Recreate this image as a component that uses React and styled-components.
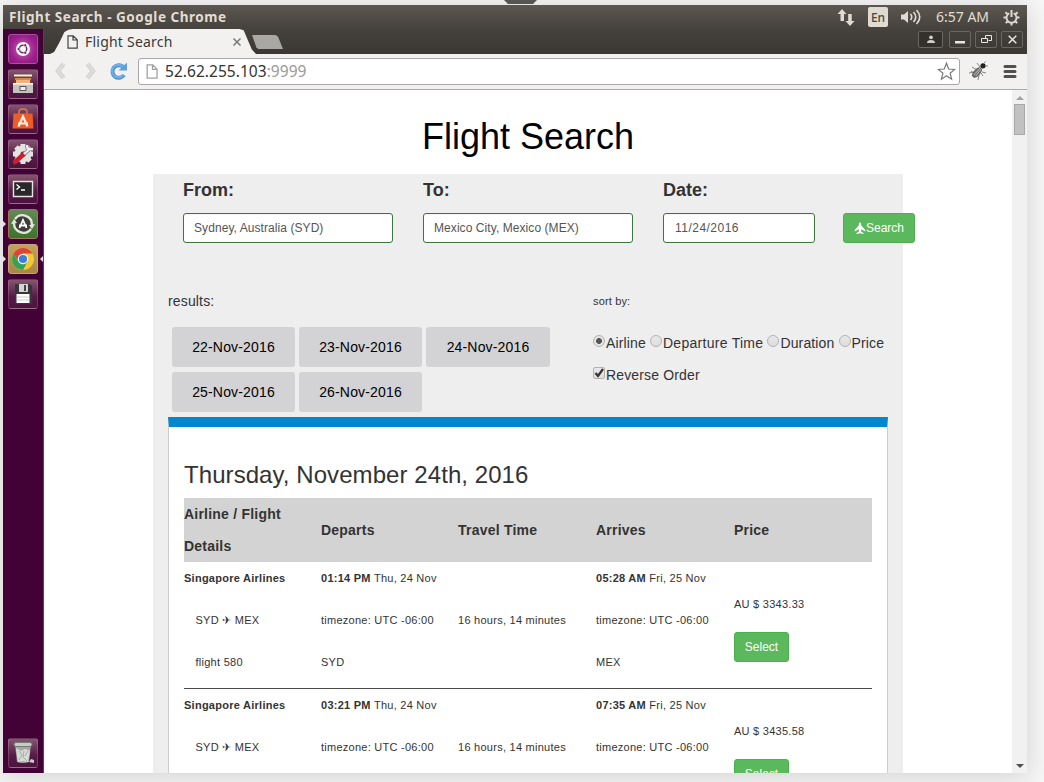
import React from "react";
import styled, { createGlobalStyle, css } from "styled-components";

const GlobalStyle = createGlobalStyle`
  * { box-sizing: border-box; }
  body {
    margin: 0;
    overflow: hidden;
    background: #f7f7f7;
    font-family: "Liberation Sans", Arial, sans-serif;
    color: #333;
  }
  h1, h2, p { margin: 0; font-weight: normal; }
`;

const uiFont = css`
  font-family: "Noto Sans", "Open Sans", sans-serif;
`;

const Stage = styled.div`
  position: relative;
  width: 1044px;
  height: 782px;
  padding: 5px 17px 9px 3px;
  overflow: hidden;
`;

const Notch = styled.div`
  position: absolute;
  top: 0;
  left: 504px;
  width: 33px;
  height: 4px;
  background: #565656;
  clip-path: polygon(0 0, 100% 0, 88% 100%, 12% 100%);
`;

const Desktop = styled.div`
  width: 1024px;
  height: 768px;
  display: flex;
  flex-direction: column;
  overflow: hidden;
  box-shadow: 0 3px 24px 2px rgba(0, 0, 0, 0.14);
  background: #fff;
`;

const MenuBar = styled.header`
  ${uiFont}
  flex: none;
  height: 24px;
  display: flex;
  align-items: center;
  justify-content: space-between;
  padding: 0 7px 0 6px;
  background: linear-gradient(#5c5751, #45413c);
  color: #e2ddd3;
`;

const WindowTitle = styled.span`
  font-size: 13.5px;
  font-weight: 700;
  white-space: nowrap;
  letter-spacing: 0.53px;
`;

const Indicators = styled.div`
  display: flex;
  align-items: center;
  svg { display: block; }
`;

const Language = styled.span`
  width: 20px;
  height: 20px;
  margin: 0 12px 0 13px;
  border-radius: 2px;
  background: #dfdbd2;
  color: #4a4640;
  font-size: 12px;
  font-weight: 500;
  line-height: 21px;
  text-align: center;
`;

const Clock = styled.span`
  margin: -2px 12px 0 15px;
  width: 55px;
  font-size: 14px;
  letter-spacing: 0;
  white-space: nowrap;
`;

const Body = styled.div`
  flex: 1;
  min-height: 0;
  display: flex;
`;

const Launcher = styled.nav`
  flex: none;
  width: 41px;
  display: flex;
  flex-direction: column;
  gap: 5px;
  padding: 5px 6px 5px 5px;
  background: #430235;
  border-right: 1px solid #6b3660;
`;

const Tile = styled.div`
  position: relative;
  flex: none;
  width: 30px;
  height: 30px;
  border-radius: 3px;
  border: 1px solid ${(p) => p.$edge || "rgba(255,255,255,.16)"};
  background: ${(p) => p.$bg || "linear-gradient(#85556f, #551a45 60%, #4d123d)"};
  ${(p) => p.$last && "margin-top: auto;"}
  svg { display: block; width: 28px; height: 28px; }
`;

const Pip = styled.i`
  position: absolute;
  top: 11px;
  ${(p) => (p.$right ? "right: -6px;" : "left: -6px;")}
  border: 3px solid transparent;
  ${(p) => (p.$right ? "border-right-color: #e6dbe3; border-left: 0;" : "border-left-color: #e6dbe3; border-right: 0;")}
`;

const Browser = styled.div`
  flex: 1;
  min-width: 0;
  display: flex;
  flex-direction: column;
`;

const TabStrip = styled.div`
  flex: none;
  height: 25px;
  display: flex;
  background: linear-gradient(#45413c, #3b3833);
`;

const Tab = styled.div`
  ${uiFont}
  width: 206px;
  height: 25px;
  margin-left: 6px;
  padding: 0 15px 0 16px;
  display: flex;
  align-items: center;
  background: #f2f1f0;
  clip-path: polygon(0 100%, 2% 92%, 4.5% 55%, 7% 12%, 9% 3%, 11% 0, 92% 0, 94% 5%, 98% 82%, 100% 100%);
  font-size: 14px;
  letter-spacing: 0.22px;
  color: #3a3a3a;
  span { flex: 1; margin-left: 6px; white-space: nowrap; }
`;

const NewTab = styled.div`
  width: 31px;
  height: 14px;
  margin: 6px 0 0 -4px;
  background: #aaa8a5;
  clip-path: polygon(0 0, 76% 0, 84% 12%, 100% 100%, 20% 100%, 14% 88%);
`;

const WindowButtons = styled.div`
  display: flex;
  align-items: flex-start;
  gap: 4px;
  margin-left: auto;
  padding: 2px 4px 0 0;
`;

const WindowButton = styled.span`
  width: 22px;
  height: 17px;
  border: 1px solid #6a6761;
  border-radius: 2px;
  display: flex;
  align-items: center;
  justify-content: center;
  ${(p) => p.$user && "width: 25px; margin-right: 2px; background: #34312d;"}
`;

const Toolbar = styled.div`
  flex: none;
  height: 36px;
  display: flex;
  align-items: center;
  padding: 0 8px 1px 9px;
  background: #f2f1f0;
  border-bottom: 1px solid #aca7ab;
  > svg { flex: none; }
`;

const AddressBar = styled.div`
  ${uiFont}
  width: 822px;
  height: 27px;
  margin: 0 8px 0 10px;
  display: flex;
  align-items: center;
  padding: 0 3px 0 6px;
  border: 1px solid #aaa7ab;
  border-radius: 3px;
  background: #fff;
  font-size: 15.5px;
  color: #333;
  p { flex: 1; margin-left: 6px; letter-spacing: 0.04px; white-space: nowrap; }
  em { font-style: normal; color: #999; }
`;

const Viewport = styled.div`
  flex: 1;
  min-height: 0;
  display: flex;
`;

const Page = styled.main`
  flex: 1;
  overflow: hidden;
  display: flex;
  flex-direction: column;
  align-items: center;
`;

const Scrollbar = styled.aside`
  width: 15px;
  display: flex;
  flex-direction: column;
  align-items: center;
  background: #f1f1f1;
  padding: 6px 0 5px;
`;

const Arrow = styled.i`
  width: 0;
  height: 0;
  border: 4px solid transparent;
  ${(p) => (p.$down ? "border-top: 4px solid #505050; border-bottom: 0; margin-top: auto;" : "border-bottom: 4px solid #a3a3a3; border-top: 0;")}
`;

const Thumb = styled.div`
  width: 11px;
  height: 31px;
  margin-top: 4px;
  background: #c1c1c1;
  border: 1px solid #a8a8a8;
`;

const PageTitle = styled.h1`
  flex: none;
  height: 84px;
  padding-top: 27px;
  font-size: 36px;
  line-height: 40px;
  color: #000;
`;

const Panel = styled.section`
  flex: none;
  width: 750px;
  padding: 0 15px;
  background: #eee;
`;

const SearchForm = styled.div`
  display: flex;
  align-items: flex-end;
  height: 69px;
  padding-left: 15px;
`;

const Field = styled.label`
  flex: none;
  width: ${(p) => p.$width}px;
  margin-right: ${(p) => p.$gap}px;
  font-size: 18px;
  font-weight: 700;
  line-height: 32px;
`;

const Input = styled.span`
  display: block;
  height: 30px;
  margin-top: 7px;
  padding: 0 10px;
  border: 1px solid #3c763d;
  border-radius: 3px;
  background: #fff;
  color: #555;
  font-size: 12px;
  font-weight: 400;
  line-height: 28px;
  letter-spacing: ${(p) => (p.$date ? "0.48px" : "0.07px")};
  ${(p) => p.$date && "padding-left: 11px;"}
  box-shadow: inset 0 1px 1px rgba(0, 0, 0, 0.05);
`;

const GreenButton = styled.button`
  flex: none;
  display: inline-flex;
  align-items: center;
  justify-content: center;
  width: ${(p) => p.$width}px;
  height: 30px;
  padding: 0;
  border: 1px solid #4cae4c;
  border-radius: 3px;
  background: #5cb85c;
  color: #fff;
  font: 12px/28px "Liberation Sans", Arial, sans-serif;
`;

const Controls = styled.div`
  display: flex;
  padding-top: 42px;
  height: 174px;
  font-size: 14px;
  line-height: 32px;
  letter-spacing: 0.15px;
`;

const DateColumn = styled.div`
  width: 425px;
`;

const DateButtons = styled.div`
  display: flex;
  flex-wrap: wrap;
  gap: 5px 4px;
  padding: 10px 0 0 4px;
`;

const DateButton = styled.button`
  width: 123px;
  height: 40px;
  padding: 0;
  border: 0;
  border-radius: 3px;
  background: #d3d2d4;
  color: #000;
  font: 14px "Liberation Sans", Arial, sans-serif;
  letter-spacing: 0.16px;
  &:nth-child(3) { width: 124px; }
`;

const SortColumn = styled.div`
  flex: none;
  white-space: nowrap;
  small { display: block; font-size: 11px; margin-bottom: 10px; }
`;

const SortRow = styled.div`
  display: flex;
  align-items: center;
  gap: 4px;
`;

const Choice = styled.label`
  display: flex;
  align-items: center;
  ${(p) => p.$wide && "letter-spacing: 0.28px;"}
`;

const Mark = styled.i`
  position: relative;
  width: 12px;
  height: 12px;
  margin: -4px 1px 0 0;
  border: 1px solid #b2b2b2;
  border-radius: ${(p) => (p.$square ? "2px" : "50%")};
  background: linear-gradient(#e9e9e9, #ddd);
  ${(p) => p.$on && "background: radial-gradient(circle, #555 0 2.6px, #e5e5e5 3.2px);"}
  svg { position: absolute; left: 0; top: -1px; }
`;

const Results = styled.section`
  height: 420px;
  padding: 32px 15px 0;
  border: 1px solid #ccc;
  border-top: 10px solid #0088ce;
  background: #fff;
`;

const DayTitle = styled.h2`
  font-size: 24px;
  line-height: 32px;
  height: 39px;
  letter-spacing: 0.07px;
`;

const FlightRow = styled.div`
  display: grid;
  grid-template-columns: 137px 137px 138px 138px 1fr;
  height: ${(p) => (p.$head ? 64 : 127)}px;
  line-height: 32px;
  ${(p) =>
    p.$head
      ? "align-items: center; background: #d3d3d3; font-size: 14px; font-weight: 700; letter-spacing: 0.22px;"
      : "border-bottom: 1px solid #4a4a4a; font-size: 11px; letter-spacing: 0.26px;"}
`;

const Cell = styled.div`
  display: flex;
  flex-direction: column;
  gap: 10px;
  white-space: nowrap;
  padding-top: ${(p) => p.$top || 0}px;
`;

const Indent = styled.span`
  padding-left: 11.5px;
`;

const SelectSlot = styled.div`
  margin-top: 2px;
  line-height: 0;
`;

const PageIcon = ({ size = 13, stroke = "#666" }) => (
  <svg width={size} height={size + 1} viewBox="0 0 13 14" fill="none" stroke={stroke} strokeWidth="1.2">
    <path d="M2 .8h5.2l4 4v8.4H2zM7 .8V5h4.2" />
  </svg>
);

const Chevron = ({ flip }) => (
  <svg width="14" height="18" viewBox="0 0 14 18">
    <g transform={flip ? "translate(14 0) scale(-1 1)" : undefined} fill="none">
      <path d="M10.500 2 5 9l5.500 7" stroke="#cfcdca" strokeWidth="4.400" />
      <path d="M10.500 2 5 9l5.500 7" stroke="#dedcd9" strokeWidth="2.800" />
    </g>
  </svg>
);

const Spacer = styled.span`
  flex: none;
  width: ${(p) => p.$width}px;
`;

const gear = Array.from({ length: 8 }, (_, i) => i * 45);

const flights = [
  { depart: "01:14 PM", arrive: "05:28 AM", price: "3343.33", number: "580", from: "SYD", to: "MEX" },
  { depart: "03:21 PM", arrive: "07:35 AM", price: "3435.58" },
];

function LauncherIcons() {
  return (
    <Launcher>
      <Tile $bg="radial-gradient(circle, #c467b5, #9d1f8c 65%, #8d147c)" $edge="#a354a0">
        <svg viewBox="0 0 28 28">
          <circle cx="14" cy="14" r="7" fill="#fff" />
          <circle cx="14" cy="14" r="3.7" fill="none" stroke="#712566" strokeWidth="1.5" />
          <g fill="#712566" stroke="#fff" strokeWidth=".6">
            <circle cx="9.6" cy="14" r="1.5" /><circle cx="16.2" cy="10.2" r="1.5" /><circle cx="16.2" cy="17.8" r="1.5" />
          </g>
        </svg>
      </Tile>
      <Tile>
        <svg viewBox="0 0 28 28">
          <path d="M5 5h18v10H5z" fill="#7d3c19" />
          <path d="M5 4.500h18v2H5z" fill="#f7f0dd" />
          <path d="M6 8h16v2H6z" fill="#c98a58" /><path d="M7 10h14v3H7z" fill="#efb27a" />
          <path d="M4 13h20v10H4z" fill="#c4c3c0" /><path d="M4 13h20v1.500H4z" fill="#fff" />
          <path d="M11 16.500h6v4h-6z" fill="#eee" stroke="#555" />
        </svg>
      </Tile>
      <Tile>
        <svg viewBox="0 0 28 28">
          <path d="M10 10V7q0-3 4-3t4 3v3" fill="none" stroke="#e77747" strokeWidth="1.5" />
          <path d="M4.500 8.500h19l1 15h-21z" fill="#ec5c27" />
          <path d="m9.500 21.500 4.500-10 4.500 10M9 18.500h10" fill="none" stroke="#ffece2" strokeWidth="2.2" />
        </svg>
      </Tile>
      <Tile>
        <svg viewBox="0 0 28 28">
          <g fill="#e5e2e2">
            {gear.map((a) => <path key={a} d="M11.500 4h5v5h-5z" transform={`rotate(${a} 14 14)`} />)}
          </g>
          <circle cx="14" cy="14" r="5.500" fill="none" stroke="#e5e2e2" strokeWidth="6" />
          <path d="m6 22 9-8" stroke="#c6202d" strokeWidth="4.500" strokeLinecap="round" />
          <path d="m15 14 6-5m-3-4q-1 5 6 4" stroke="#8b8690" strokeWidth="3.600" fill="none" />
          <path d="m15 14 6-5m-3-4q-1 5 6 4" stroke="#f1f0f0" strokeWidth="2.200" fill="none" />
        </svg>
      </Tile>
      <Tile>
        <svg viewBox="0 0 28 28">
          <path d="M4.500 6.500h19v15h-19z" fill="#29272a" stroke="#e6e3e4" strokeWidth="1.4" />
          <path d="m7.500 9.500 3 2.500-3 2.500M12 15h4" fill="none" stroke="#fff" strokeWidth="1.4" />
        </svg>
      </Tile>
      <Tile $bg="linear-gradient(#648956, #3a742b)" $edge="#a87457">
        <Pip />
        <svg viewBox="0 0 28 28">
          <circle cx="14" cy="14" r="8" fill="#403d39" />
          <path d="M6 9a9.500 9.500 0 0 1 17 6M22 19a9.500 9.500 0 0 1-17-6" fill="none" stroke="#e2e6dd" strokeWidth="2.3" />
          <path d="m20 15 6-1-3 5zM8 13l-6 1 3-5z" fill="#e2e6dd" />
          <path d="m10.500 18 3.500-8 3.500 8M10 15.500h8" fill="none" stroke="#fff" strokeWidth="1.8" />
        </svg>
      </Tile>
      <Tile $bg="linear-gradient(#c3a25d, #a88746)" $edge="#c1a779">
        <Pip /><Pip $right />
        <svg viewBox="0 0 28 28">
          <circle cx="14" cy="14" r="11" fill="#f2c933" />
          <path d="M4.500 8.500A11 11 0 0 1 23.500 8.500H14L9.400 16.600z" fill="#db4639" />
          <path d="M4.500 8.500A11 11 0 0 0 14 25l4.600-8.500H9.400z" fill="#36a155" />
          <circle cx="14" cy="14" r="5.300" fill="#f4f4f0" /><circle cx="14" cy="14" r="4.100" fill="#3b7de0" />
        </svg>
      </Tile>
      <Tile>
        <svg viewBox="0 0 28 28">
          <path d="M6 4h15l2 2v18H6z" fill="#373538" />
          <path d="M10 4h9v8h-9z" fill="#d4d3d3" /><path d="M15 5h2v6h-2z" fill="#444" />
          <path d="M7.500 14h13v9h-13z" fill="#fff" /><path d="M8 17h12M8 20h12" stroke="#ccc" />
        </svg>
      </Tile>
      <Tile $last>
        <svg viewBox="0 0 28 28">
          <path d="m6 5 2 18q6 2 12 0l2-18z" fill="#a5a8a3" />
          <path d="m7 9 5 3 4-2 5 2-2 11-5-1-5 1z" fill="#d7dad6" />
          <path d="m10 12 3 4-3 5m5-9-1 6 4 4m1-10-3 5" fill="none" stroke="#a5aaa3" />
          <rect x="5" y="3.500" width="18" height="4" rx="2" fill="#c8cbc6" stroke="#757c77" />
          <path d="m20 23 2-3 3 1v3z" fill="#ccc" />
        </svg>
      </Tile>
    </Launcher>
  );
}

function Flight({ flight }) {
  return (
    <FlightRow>
      <Cell><b>Singapore Airlines</b><Indent>SYD ✈ MEX</Indent>{flight.number && <Indent>flight {flight.number}</Indent>}</Cell>
      <Cell><span><b>{flight.depart}</b> Thu, 24 Nov</span><span>timezone: UTC -06:00</span>{flight.from && <span>{flight.from}</span>}</Cell>
      <Cell $top={42}><span>16 hours, 14 minutes</span></Cell>
      <Cell><span><b>{flight.arrive}</b> Fri, 25 Nov</span><span>timezone: UTC -06:00</span>{flight.to && <span>{flight.to}</span>}</Cell>
      <Cell $top={26}>
        <span>AU $ {flight.price}</span>
        <SelectSlot><GreenButton $width={55}>Select</GreenButton></SelectSlot>
      </Cell>
    </FlightRow>
  );
}

export default function App() {
  return (
    <Stage>
      <GlobalStyle />
      <Notch />
      <Desktop>
        <MenuBar>
          <WindowTitle>Flight Search - Google Chrome</WindowTitle>
          <Indicators>
            <svg width="18" height="18" viewBox="0 0 18 18" fill="#dfdbd2">
              <path d="M5 1 9.500 6H7v7H3.500V6H.5zM13 18l-4.500-5h2.700V6h3.500v7h2.800z" />
            </svg>
            <Language>En</Language>
            <svg width="21" height="18" viewBox="0 0 21 18" fill="none" stroke="#dfdbd2" strokeWidth="1.6">
              <path d="M1 6.500h3l4-3.500v12l-4-3.500H1z" fill="#dfdbd2" stroke="none" />
              <path d="M10.500 6q2.500 3 0 6M13.500 4q4.500 5 0 10M16.500 2q6.500 7 0 14" />
            </svg>
            <Clock>6:57 AM</Clock>
            <svg width="17" height="17" viewBox="0 0 17 17" fill="none" stroke="#dfdbd2">
              <path d="M6.300 4.200a5 5 0 1 0 4.400 0" strokeWidth="1.800" />
              <path d="M8.500 1v7" strokeWidth="2" />
              {[50, 90, 135, 180, 225, 270, 310].map((a) => (
                <path key={a} d="M8.500 .5v3" strokeWidth="2" transform={`rotate(${a} 8.500 8.500)`} />
              ))}
            </svg>
          </Indicators>
        </MenuBar>
        <Body>
          <LauncherIcons />
          <Browser>
            <TabStrip>
              <Tab>
                <PageIcon size={13} stroke="#444" />
                <span>Flight Search</span>
                <svg width="8" height="8" viewBox="0 0 8 8" stroke="#777" strokeWidth="1.500"><path d="m.5.5 7 7m0-7-7 7" /></svg>
              </Tab>
              <NewTab />
              <WindowButtons>
                <WindowButton $user>
                  <svg width="10" height="9" viewBox="0 0 10 9" fill="#d0ceca"><circle cx="5" cy="2.300" r="1.900" /><path d="M1 8q0-3 4-3t4 3z" /></svg>
                </WindowButton>
                <WindowButton><svg width="10" height="8" viewBox="0 0 10 8"><path d="M0 5h10v2.500H0z" fill="#e8e6e2" /></svg></WindowButton>
                <WindowButton>
                  <svg width="11" height="9" viewBox="0 0 11 9" fill="none" stroke="#e8e6e2"><path d="M4.500 3V.500h6v5h-3M.500 3.500h6v4h-6z" /></svg>
                </WindowButton>
                <WindowButton><svg width="9" height="9" viewBox="0 0 9 9" stroke="#e8e6e2" strokeWidth="1.500"><path d="m.7.7 7.600 7.600m0-7.600L.7 8.300" /></svg></WindowButton>
              </WindowButtons>
            </TabStrip>
            <Toolbar>
              <Chevron />
              <Spacer $width={17} />
              <Chevron flip />
              <Spacer $width={11} />
              <svg width="19" height="20" viewBox="0 0 19 20" fill="none">
                <path d="M15 14A6.300 6.300 0 1 1 14 5.800" stroke="#4b8fd2" strokeWidth="4" />
                <path d="M14.500 13.800A6.300 6.300 0 1 1 14 5.800" stroke="#73aee4" strokeWidth="2.200" />
                <path d="M18 1.500V9.500H9.500z" fill="#5c9fdf" />
              </svg>
              <AddressBar>
                <PageIcon size={14} stroke="#a19fa2" />
                <p>52.62.255.103<em>:9999</em></p>
                <svg width="19" height="19" viewBox="0 0 19 19" fill="#fff" stroke="#777" strokeWidth="1.200">
                  <path d="m9.500 1.200 2.200 5.800 6 .4-4.600 3.800 1.500 6-5.100-3.400L4.400 17.200l1.500-6L1.300 7.400l6-.4z" />
                </svg>
              </AddressBar>
              <svg width="20" height="20" viewBox="0 0 20 20" fill="none" stroke="#858585">
                <path d="M9 9 4 6M12 6l-3-4M7 11l-6 1M11 14l-1 5M14 11l4 1M13 12l2 3M6 12l-3-2" />
                <ellipse cx="9" cy="11.500" rx="5.600" ry="2.700" transform="rotate(-48 9 11.500)" fill="#777" stroke="#555" />
                <path d="m6 14 6-7m-4 8 5-7" stroke="#b4b4b4" />
                <circle cx="15" cy="4.800" r="2.600" fill="#222" stroke="none" />
                <path d="m16 2 1.500-1.500M17.500 5H20" />
              </svg>
              <Spacer $width={15} />
              <svg width="14" height="15" viewBox="0 0 14 15" stroke="#505050" strokeWidth="3" strokeLinecap="round"><path d="M2 2.500h10M2 7.500h10M2 12.500h10" /></svg>
            </Toolbar>
            <Viewport>
              <Page>
                <PageTitle>Flight Search</PageTitle>
                <Panel>
                  <SearchForm>
                    <Field $width={210} $gap={30}>From:<Input>Sydney, Australia (SYD)</Input></Field>
                    <Field $width={210} $gap={30}>To:<Input>Mexico City, Mexico (MEX)</Input></Field>
                    <Field $width={152} $gap={28}>Date:<Input $date>11/24/2016</Input></Field>
                    <GreenButton $width={72}>
                      <svg width="12" height="12" viewBox="-.5 0 12 12" fill="#fff"><path d="M5.500 0q1.300 1 1.300 3.600L10.800 8v1.500L6.700 7.300 6.500 9.500 9 11v1l-3.500-.8L2 12v-1l2.500-1.500-.2-2.200L.2 9.500V8l4-4.400Q4.200 1 5.500 0" /></svg>
                      Search
                    </GreenButton>
                  </SearchForm>
                  <Controls>
                    <DateColumn>
                      <p>results:</p>
                      <DateButtons>
                        {[22, 23, 24, 25, 26].map((d) => <DateButton key={d}>{d}-Nov-2016</DateButton>)}
                      </DateButtons>
                    </DateColumn>
                    <SortColumn>
                      <small>sort by:</small>
                      <SortRow>
                        <Choice><Mark $on />Airline</Choice>
                        <Choice $wide><Mark />Departure Time</Choice>
                        <Choice><Mark />Duration</Choice>
                        <Choice><Mark />Price</Choice>
                      </SortRow>
                      <Choice>
                        <Mark $square>
                          <svg width="11" height="11" viewBox="0 0 11 11"><path d="m1.500 6 2.500 3 5-7" fill="none" stroke="#333" strokeWidth="2.200" /></svg>
                        </Mark>
                        Reverse Order
                      </Choice>
                    </SortColumn>
                  </Controls>
                  <Results>
                    <DayTitle>Thursday, November 24th, 2016</DayTitle>
                    <FlightRow $head>
                      <div>Airline / Flight<br />Details</div>
                      <div>Departs</div><div>Travel Time</div><div>Arrives</div><div>Price</div>
                    </FlightRow>
                    {flights.map((f) => <Flight key={f.price} flight={f} />)}
                  </Results>
                </Panel>
              </Page>
              <Scrollbar><Arrow /><Thumb /><Arrow $down /></Scrollbar>
            </Viewport>
          </Browser>
        </Body>
      </Desktop>
    </Stage>
  );
}
